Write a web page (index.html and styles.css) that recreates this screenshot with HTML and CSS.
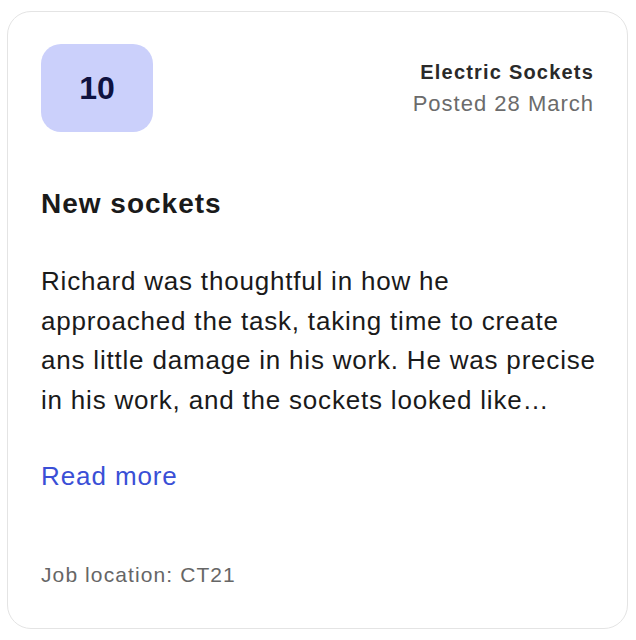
FILE: index.html
```html
<!DOCTYPE html>
<html lang="en">
<head>
<meta charset="utf-8">
<link rel="stylesheet" href="styles.css">
<title>Review</title>
</head>
<body>
<article class="review-card">
  <header class="review-head">
    <div class="score">10</div>
    <div class="meta">
      <div class="meta-job">Electric Sockets</div>
      <div class="meta-date">Posted 28 March</div>
    </div>
  </header>
  <h2 class="review-title">New sockets</h2>
  <p class="review-body">Richard was thoughtful in how he approached the task, taking time to create ans little damage in his work. He was precise in his work, and the sockets looked like…</p>
  <a class="read-more" href="#">Read more</a>
  <div class="location">Job location: CT21</div>
</article>
</body>
</html>
```
FILE: styles.css
```css
html, body {
  margin: 0;
  padding: 0;
  background: #ffffff;
}

body {
  font-family: "Liberation Sans", Arial, sans-serif;
  color: #1a1a1a;
  padding: 11px 8px 0 7px;
}

.review-card {
  box-sizing: border-box;
  width: 621px;
  height: 618px;
  border: 1.5px solid #e4e4e4;
  border-radius: 24px;
  padding: 32px 33px 0 33px;
  display: flex;
  flex-direction: column;
}

.review-head {
  display: flex;
  justify-content: space-between;
  align-items: flex-start;
}

.score {
  width: 112px;
  height: 88px;
  border-radius: 20px;
  background: #cbd0fb;
  color: #0f1240;
  font-size: 32px;
  font-weight: 700;
  display: flex;
  align-items: center;
  justify-content: center;
}

.meta {
  text-align: right;
  padding-top: 14px;
}

.meta-job {
  font-size: 20px;
  font-weight: 700;
  color: #2a2a2a;
  line-height: 28px;
  letter-spacing: 1.2px;
}

.meta-date {
  font-size: 22px;
  color: #6b6b6b;
  line-height: 35px;
  letter-spacing: 1px;
}

.review-title {
  margin: 55px 0 0 0;
  font-size: 28px;
  font-weight: 700;
  line-height: 34px;
  color: #1a1a1a;
  letter-spacing: 1px;
}

.review-body {
  margin: 41px -5px 0 0;
  font-size: 26px;
  line-height: 39.5px;
  color: #1a1a1a;
  letter-spacing: 0.8px;
}

.read-more {
  margin-top: 39px;
  font-size: 26px;
  line-height: 34px;
  color: #3a4fd6;
  text-decoration: none;
  align-self: flex-start;
  letter-spacing: 0.9px;
}

.location {
  margin-top: 68px;
  font-size: 21px;
  line-height: 28px;
  color: #666666;
  letter-spacing: 1.1px;
}
```
